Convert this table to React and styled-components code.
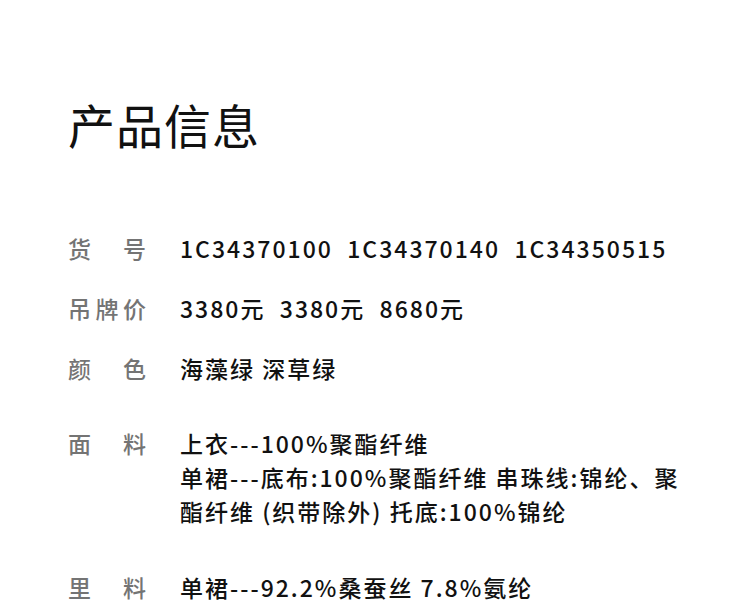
import styled, { createGlobalStyle } from "styled-components";

const GlobalStyle = createGlobalStyle`
  html, body {
    margin: 0;
    padding: 0;
    background: #ffffff;
  }
  body {
    font-family: "Noto Sans CJK SC", "Noto Sans", sans-serif;
  }
`;

const Page = styled.div`
  width: 750px;
  height: 607px;
  overflow: hidden;
  padding: 92px 0 0 68px;
  box-sizing: border-box;
`;

const Title = styled.h1`
  margin: 0 0 75px;
  font-size: 47px;
  font-weight: 400;
  line-height: 64px;
  color: #111;
  letter-spacing: 1px;
`;

const InfoList = styled.dl`
  margin: 0;
  display: flex;
  flex-direction: column;
`;

const Row = styled.div`
  display: grid;
  grid-template-columns: 112px 1fr;
  margin-top: ${(props) => props.gap}px;
`;

const Label = styled.dt`
  font-size: 23px;
  font-weight: 500;
  line-height: 34px;
  letter-spacing: 4.5px;
  color: #747474;
  white-space: pre;
`;

const Value = styled.dd`
  margin: 0;
  font-size: 23px;
  font-weight: 500;
  line-height: 34px;
  letter-spacing: 2px;
  color: #111;
  white-space: pre;
`;

const rows = [
  { label: "货　号", value: "1C34370100  1C34370140  1C34350515", gap: 0 },
  { label: "吊牌价", value: "3380元  3380元  8680元", gap: 26 },
  { label: "颜　色", value: "海藻绿 深草绿", gap: 26 },
  {
    label: "面　料",
    value:
      "上衣---100%聚酯纤维\n单裙---底布:100%聚酯纤维 串珠线:锦纶、聚\n酯纤维 (织带除外) 托底:100%锦纶",
    gap: 41,
  },
  { label: "里　料", value: "单裙---92.2%桑蚕丝 7.8%氨纶", gap: 42 },
];

export default function App() {
  return (
    <Page>
      <GlobalStyle />
      <Title>产品信息</Title>
      <InfoList>
        {rows.map((row) => (
          <Row key={row.label} gap={row.gap}>
            <Label>{row.label}</Label>
            <Value>{row.value}</Value>
          </Row>
        ))}
      </InfoList>
    </Page>
  );
}
